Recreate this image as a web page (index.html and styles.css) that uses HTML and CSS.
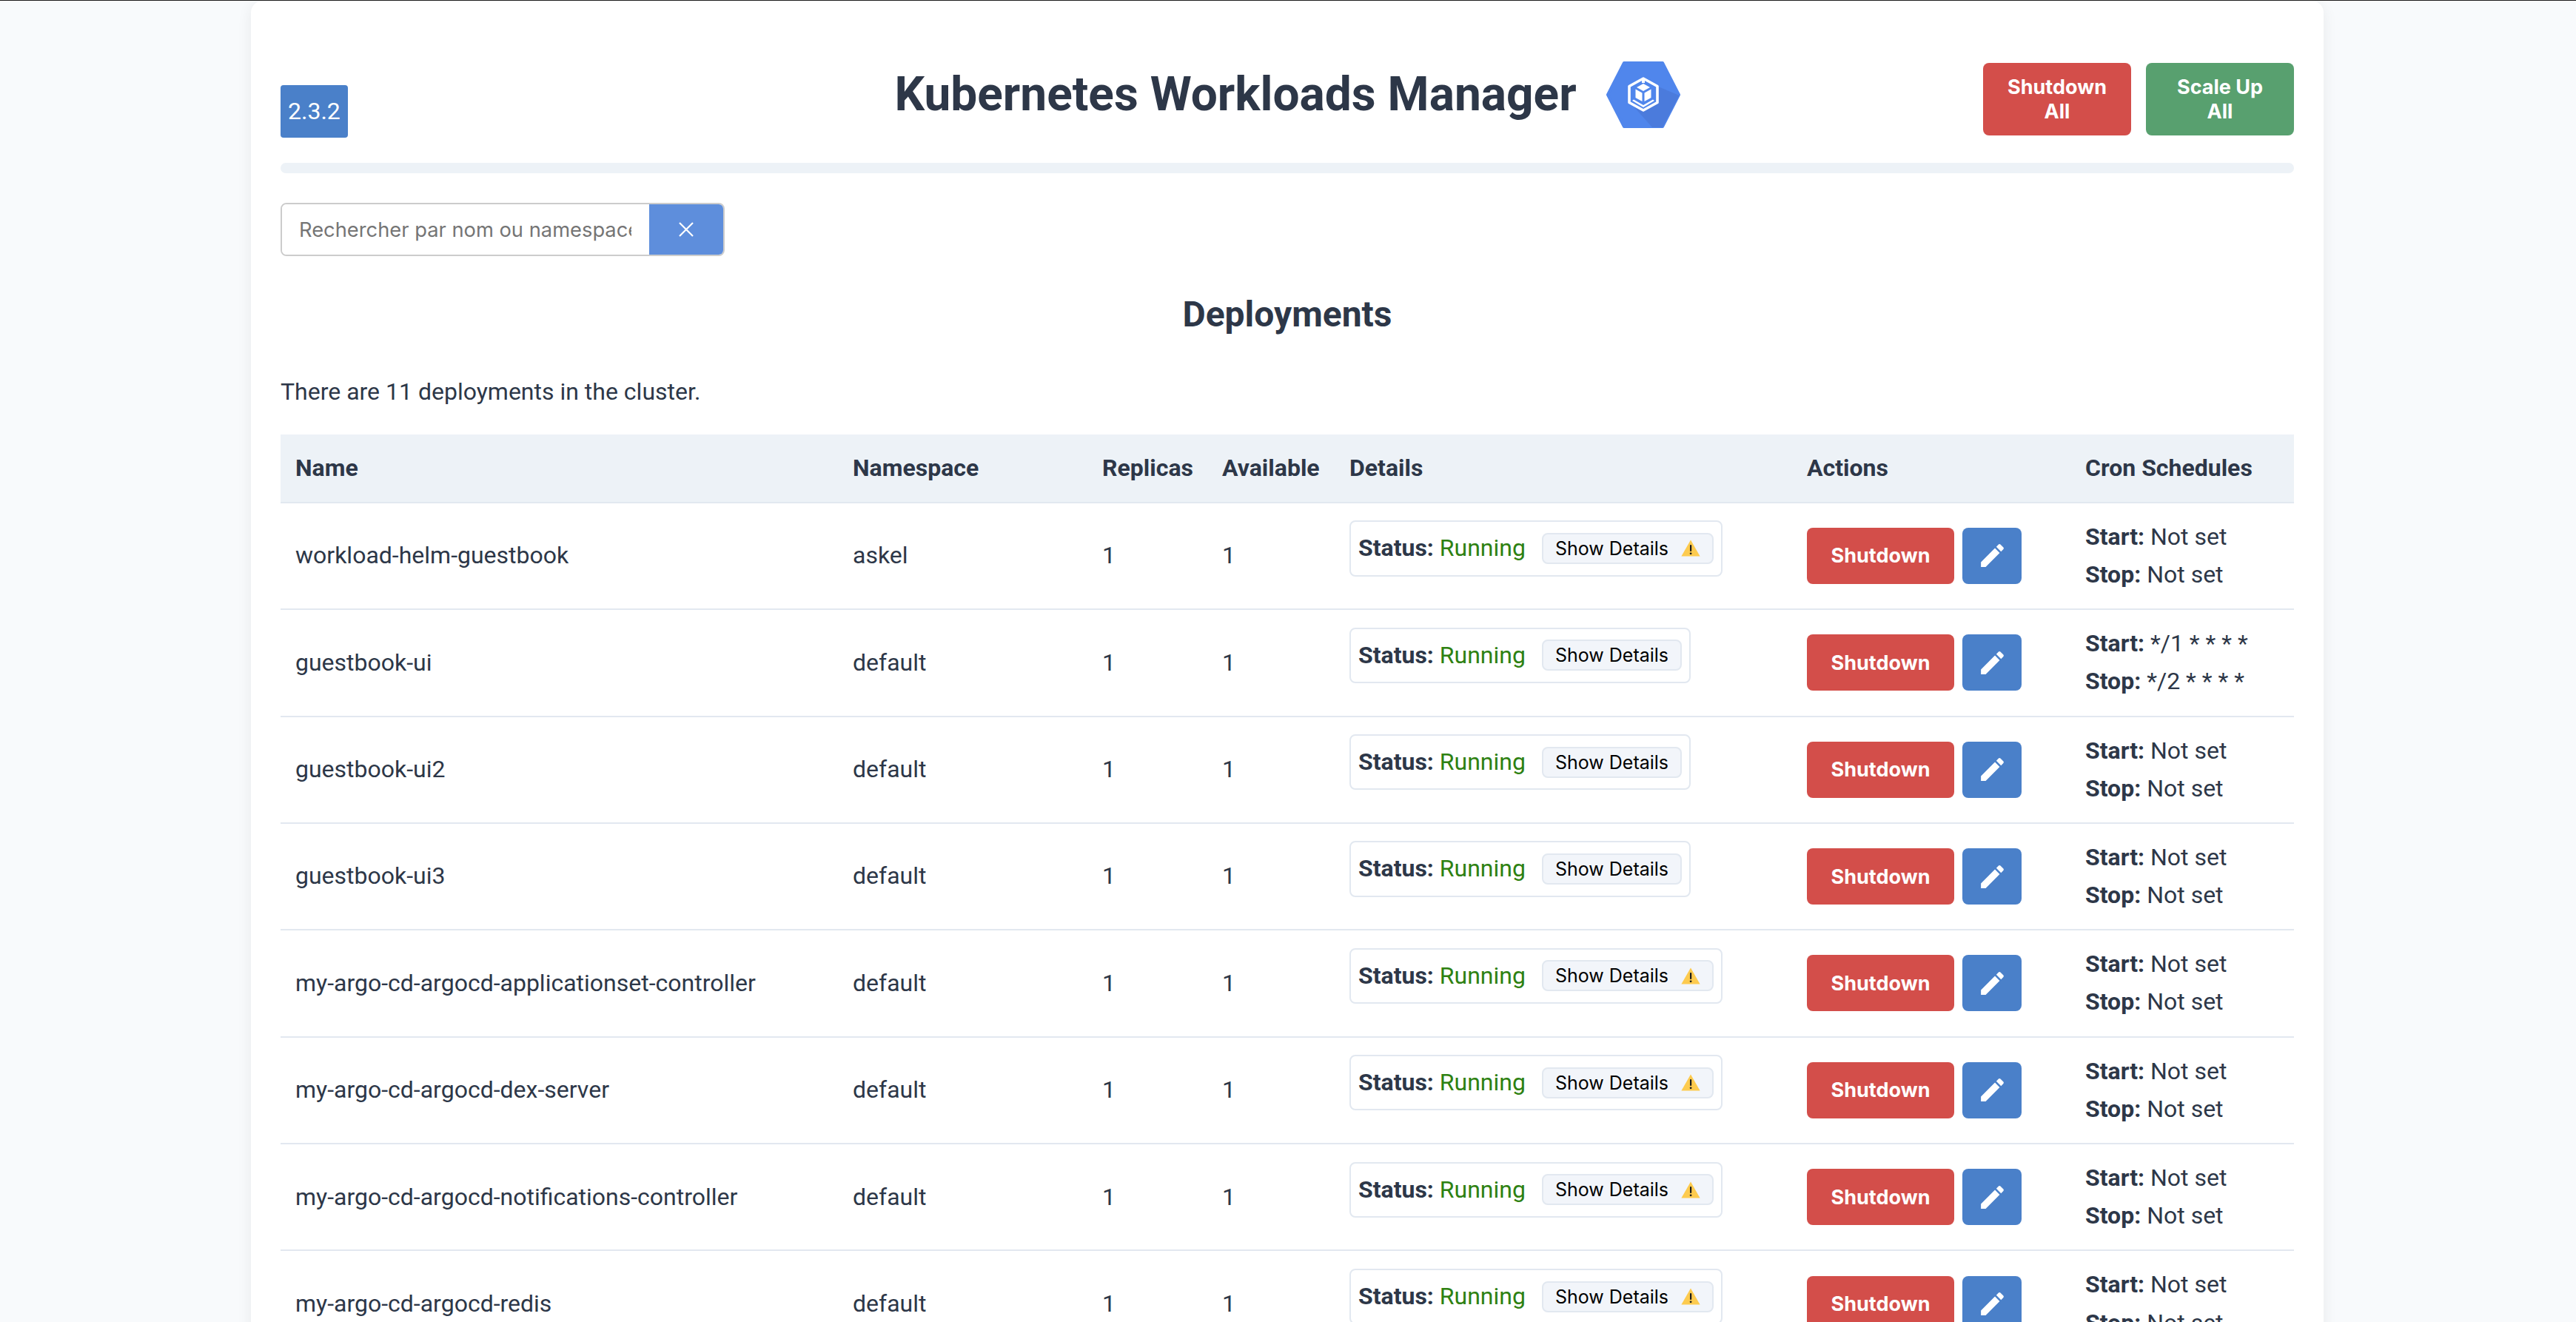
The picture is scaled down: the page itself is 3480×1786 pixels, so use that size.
FILE: index.html
```html
<!DOCTYPE html>
<html lang="en">
<head>
    <meta charset="UTF-8">
    <meta name="viewport" content="width=device-width, initial-scale=1.0">
    <title>Kubernetes Workloads Manager</title>
    <link rel="stylesheet" href="styles.css">
</head>
<body>
    <svg class="icon-defs" width="0" height="0" aria-hidden="true">
        <symbol id="icon-edit" viewBox="0 0 24 24">
            <path d="M3 17.25V21h3.75L17.81 9.94l-3.75-3.75L3 17.25zM20.71 7.04c.39-.39.39-1.02 0-1.41l-2.34-2.34c-.39-.39-1.02-.39-1.41 0l-1.83 1.83 3.75 3.75 1.83-1.83z"/>
        </symbol>
        <symbol id="icon-warn" viewBox="0 0 26 23">
            <path d="M13 0.5 L25.6 22.5 H0.4 Z" fill="#fdcb4f"/>
            <rect x="12" y="7" width="2.2" height="9" rx="1" fill="#1d1d1d"/>
            <circle cx="13.1" cy="18.8" r="1.4" fill="#1d1d1d"/>
        </symbol>
    </svg>

    <div class="container">
        <header class="top-header">
            <span class="version-badge">2.3.2</span>
            <div class="title-group">
                <h1>Kubernetes Workloads Manager</h1>
                <svg class="logo" viewBox="0 0 100 90" aria-hidden="true">
                    <path d="M24 2 H76 L98 45 L76 88 H24 L2 45 Z" fill="#5086ec" stroke="#5086ec" stroke-width="4" stroke-linejoin="round"/>
                    <path d="M68 33 L98.5 46 L76 89 H62 L38 62 Z" fill="#4b7bdc"/>
                    <path d="M50 23 L69 33.5 V55.5 L50 66 L31 55.5 V33.5 Z" fill="#5086ec" stroke="#fff" stroke-width="3.6" stroke-linejoin="round"/>
                    <path d="M50 30 L59 35 L50 40 L41 35 Z M39.5 37.5 L48.5 42.5 V54 L39.5 49 Z M60.5 37.5 L51.5 42.5 V54 L60.5 49 Z M37 51.5 L50 59 L63 51.5 L65 53 L50 62 L35 53 Z M48 24 H52 V29 H48 Z" fill="#fff"/>
                </svg>
            </div>
            <div class="header-actions">
                <button class="btn btn-danger btn-all">Shutdown All</button>
                <button class="btn btn-success btn-all">Scale Up All</button>
            </div>
        </header>
        <div class="progress-bar"></div>

        <div class="search-box">
            <input type="text" class="search-input" placeholder="Rechercher par nom ou namespace">
            <button class="search-clear" aria-label="Clear">
                <svg viewBox="0 0 22 22" width="22" height="22"><path d="M2 2 L20 20 M20 2 L2 20" stroke="#fff" stroke-width="2.2" fill="none"/></svg>
            </button>
        </div>

        <h2>Deployments</h2>
        <p class="summary">There are 11 deployments in the cluster.</p>

        <table class="workloads">
            <colgroup>
                <col class="col-name"><col class="col-ns"><col class="col-replicas"><col class="col-available">
                <col class="col-details"><col class="col-actions"><col class="col-cron">
            </colgroup>
            <thead>
                <tr>
                    <th>Name</th><th>Namespace</th><th>Replicas</th><th>Available</th>
                    <th>Details</th><th>Actions</th><th>Cron Schedules</th>
                </tr>
            </thead>
            <tbody>
                <tr>
                    <td>workload-helm-guestbook</td><td>askel</td><td>1</td><td>1</td>
                    <td><div class="status-box"><span><b>Status:</b> <span class="running">Running</span></span><button class="details-btn">Show Details<svg class="warn"><use href="#icon-warn"/></svg></button></div></td>
                    <td><div class="row-actions"><button class="btn btn-danger btn-row">Shutdown</button><button class="btn btn-edit"><svg><use href="#icon-edit"/></svg></button></div></td>
                    <td><b>Start:</b> Not set<br><b>Stop:</b> Not set</td>
                </tr>
                <tr>
                    <td>guestbook-ui</td><td>default</td><td>1</td><td>1</td>
                    <td><div class="status-box"><span><b>Status:</b> <span class="running">Running</span></span><button class="details-btn">Show Details</button></div></td>
                    <td><div class="row-actions"><button class="btn btn-danger btn-row">Shutdown</button><button class="btn btn-edit"><svg><use href="#icon-edit"/></svg></button></div></td>
                    <td><b>Start:</b> */1 * * * *<br><b>Stop:</b> */2 * * * *</td>
                </tr>
                <tr>
                    <td>guestbook-ui2</td><td>default</td><td>1</td><td>1</td>
                    <td><div class="status-box"><span><b>Status:</b> <span class="running">Running</span></span><button class="details-btn">Show Details</button></div></td>
                    <td><div class="row-actions"><button class="btn btn-danger btn-row">Shutdown</button><button class="btn btn-edit"><svg><use href="#icon-edit"/></svg></button></div></td>
                    <td><b>Start:</b> Not set<br><b>Stop:</b> Not set</td>
                </tr>
                <tr>
                    <td>guestbook-ui3</td><td>default</td><td>1</td><td>1</td>
                    <td><div class="status-box"><span><b>Status:</b> <span class="running">Running</span></span><button class="details-btn">Show Details</button></div></td>
                    <td><div class="row-actions"><button class="btn btn-danger btn-row">Shutdown</button><button class="btn btn-edit"><svg><use href="#icon-edit"/></svg></button></div></td>
                    <td><b>Start:</b> Not set<br><b>Stop:</b> Not set</td>
                </tr>
                <tr>
                    <td>my-argo-cd-argocd-applicationset-controller</td><td>default</td><td>1</td><td>1</td>
                    <td><div class="status-box"><span><b>Status:</b> <span class="running">Running</span></span><button class="details-btn">Show Details<svg class="warn"><use href="#icon-warn"/></svg></button></div></td>
                    <td><div class="row-actions"><button class="btn btn-danger btn-row">Shutdown</button><button class="btn btn-edit"><svg><use href="#icon-edit"/></svg></button></div></td>
                    <td><b>Start:</b> Not set<br><b>Stop:</b> Not set</td>
                </tr>
                <tr>
                    <td>my-argo-cd-argocd-dex-server</td><td>default</td><td>1</td><td>1</td>
                    <td><div class="status-box"><span><b>Status:</b> <span class="running">Running</span></span><button class="details-btn">Show Details<svg class="warn"><use href="#icon-warn"/></svg></button></div></td>
                    <td><div class="row-actions"><button class="btn btn-danger btn-row">Shutdown</button><button class="btn btn-edit"><svg><use href="#icon-edit"/></svg></button></div></td>
                    <td><b>Start:</b> Not set<br><b>Stop:</b> Not set</td>
                </tr>
                <tr>
                    <td>my-argo-cd-argocd-notifications-controller</td><td>default</td><td>1</td><td>1</td>
                    <td><div class="status-box"><span><b>Status:</b> <span class="running">Running</span></span><button class="details-btn">Show Details<svg class="warn"><use href="#icon-warn"/></svg></button></div></td>
                    <td><div class="row-actions"><button class="btn btn-danger btn-row">Shutdown</button><button class="btn btn-edit"><svg><use href="#icon-edit"/></svg></button></div></td>
                    <td><b>Start:</b> Not set<br><b>Stop:</b> Not set</td>
                </tr>
                <tr>
                    <td>my-argo-cd-argocd-redis</td><td>default</td><td>1</td><td>1</td>
                    <td><div class="status-box"><span><b>Status:</b> <span class="running">Running</span></span><button class="details-btn">Show Details<svg class="warn"><use href="#icon-warn"/></svg></button></div></td>
                    <td><div class="row-actions"><button class="btn btn-danger btn-row">Shutdown</button><button class="btn btn-edit"><svg><use href="#icon-edit"/></svg></button></div></td>
                    <td><b>Start:</b> Not set<br><b>Stop:</b> Not set</td>
                </tr>
            </tbody>
        </table>
    </div>
</body>
</html>
```

FILE: styles.css
```css
* {
    box-sizing: border-box;
}
html, body {
    height: 100%;
    overflow: hidden;
}
body {
    margin: 0;
    padding-right: 2px;
    border-top: 1px solid #1c1c1c;
    background-color: #f8fafc;
    color: #2d3748;
    font-family: Roboto, Arial, sans-serif;
    font-size: 32px;
    line-height: 1.6;
}
.icon-defs {
    position: absolute;
}
.container {
    width: 2800px;
    margin: 0 auto;
    padding: 40px;
    background-color: #fff;
    border-radius: 16px;
    box-shadow: 0 4px 20px rgba(0, 0, 0, 0.07);
}
.top-header {
    display: grid;
    grid-template-columns: 1fr auto 1fr;
    grid-template-rows: 105px;
    padding-top: 40px;
    padding-bottom: 34px;
    height: 179px;
}
.version-badge {
    justify-self: start;
    align-self: end;
    height: 71px;
    padding: 10px;
    line-height: 51px;
    background-color: #4a80c9;
    color: #fff;
    border-radius: 4px;
}
.title-group {
    display: flex;
    align-items: center;
    gap: 40px;
    margin-top: 2px;
    height: 90px;
}
h1 {
    margin: 0;
    font-size: 64px;
    font-weight: 700;
    white-space: nowrap;
}
.logo {
    width: 100px;
    height: 90px;
}
.header-actions {
    display: flex;
    justify-content: flex-end;
    align-items: flex-start;
    gap: 20px;
    margin-top: 4px;
}
.btn {
    border: none;
    border-radius: 8px;
    color: #fff;
    font-family: Inter, Arial, sans-serif;
    font-size: 27px;
    font-weight: 700;
    cursor: pointer;
}
.btn-all {
    width: 200px;
    padding: 16px 30px;
}
.btn-danger {
    background-color: #d34e4a;
}
.btn-success {
    background-color: #58a06f;
}
.progress-bar {
    height: 14px;
    margin-bottom: 40px;
    background-color: #edf2f7;
    border-radius: 7px;
}
.search-box {
    display: flex;
    width: 600px;
    height: 72px;
    border: 2px solid #ccc;
    border-radius: 8px;
    overflow: hidden;
}
.search-input {
    flex: 1;
    min-width: 0;
    padding: 0 24px 0 23px;
    border: none;
    outline: none;
    font-family: Inter, Arial, sans-serif;
    font-size: 27.3px;
}
.search-input::placeholder {
    color: #757575;
}
.search-clear {
    display: flex;
    align-items: center;
    justify-content: center;
    width: 100px;
    border: none;
    background-color: #5e8edc;
}
h2 {
    margin: 48px 0 48px;
    font-size: 48px;
    font-weight: 700;
    line-height: 1.3;
    text-align: center;
}
.summary {
    margin: 0 0 31px;
}
.workloads {
    width: 100%;
    table-layout: fixed;
    border-collapse: separate;
    border-spacing: 0;
}
.col-name { width: 753px; }
.col-ns { width: 337px; }
.col-replicas { width: 162px; }
.col-available { width: 172px; }
.col-details { width: 618px; }
.col-actions { width: 376px; }
.col-cron { width: 302px; }
th, td {
    padding: 20px;
    border-bottom: 2px solid #e2e8f0;
    text-align: left;
    white-space: nowrap;
}
th {
    background-color: #edf2f7;
    font-weight: 700;
}
td b {
    font-weight: 700;
}
.status-box {
    display: flex;
    align-items: center;
    gap: 22px;
    width: fit-content;
    margin-bottom: 20px;
    padding: 10px 10px;
    border: 2px solid #e2e8f0;
    border-radius: 8px;
}
.running {
    color: #2e8112;
}
.details-btn {
    display: inline-flex;
    align-items: center;
    gap: 17px;
    padding: 4px 16px;
    border: 2px solid #e2e8f0;
    border-radius: 8px;
    background-color: #f2f5fa;
    color: #000;
    font-family: Inter, Arial, sans-serif;
    font-size: 25px;
}
.warn {
    width: 26px;
    height: 23px;
    margin: 2px 0;
}
.row-actions {
    display: flex;
    gap: 11px;
}
.btn-row {
    width: 199px;
    height: 76px;
}
.btn-edit {
    display: flex;
    align-items: center;
    justify-content: center;
    width: 80px;
    height: 76px;
    padding: 0;
    background-color: #4a80c9;
}
.btn-edit svg {
    width: 41px;
    height: 41px;
    fill: #fff;
}
```
